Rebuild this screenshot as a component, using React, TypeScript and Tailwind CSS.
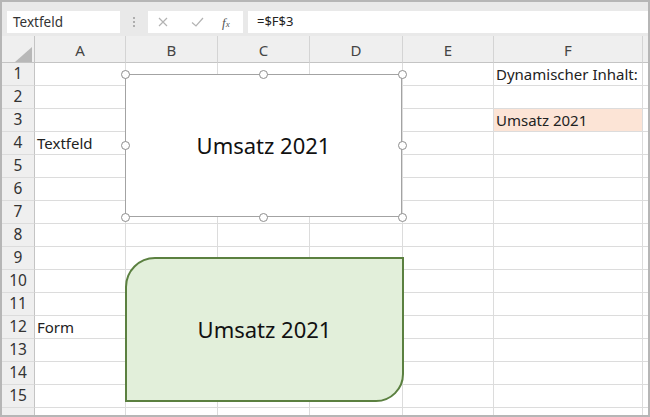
import React from "react";

const cols = ["A", "B", "C", "D", "E", "F"];
const colW = [91, 92, 92, 93, 91, 149];
const rows = Array.from({ length: 15 }, (_, i) => i + 1);

const cellText: Record<string, { text: string; pink?: boolean }> = {
  "A4": { text: "Textfeld" },
  "A12": { text: "Form" },
  "F1": { text: "Dynamischer Inhalt:" },
  "F3": { text: "Umsatz 2021", pink: true },
};

function Handle({ x, y }: { x: number; y: number }) {
  return (
    <div
      className="absolute w-[9px] h-[9px] rounded-full bg-white border-[1.5px] border-[#8e8e8e]"
      style={{ left: x - 4.5, top: y - 4.5 }}
    />
  );
}

export default function App() {
  const gridCols = `33px ${colW.map((w) => w + "px").join(" ")} 1fr`;
  const boxL = 123;
  const boxT = 38;
  const boxW = 277;
  const boxH = 143;
  return (
    <div
      className="w-[650px] h-[417px] border-2 border-[#b6b6b6] bg-white overflow-hidden flex flex-col"
      style={{ fontFamily: "'Noto Sans', 'Open Sans', sans-serif" }}
    >
      {/* formula bar */}
      <div className="h-[34px] bg-[#e9e9e9] flex items-start pt-[9px] pl-[5px] shrink-0">
        <div className="w-[113px] h-[22px] bg-white flex items-center pl-[6px] text-[13.5px] text-[#333]">
          Textfeld
        </div>
        <div className="w-[28px] h-[22px] flex flex-col items-center justify-center gap-[2px]">
          <div className="w-[2px] h-[2px] bg-[#9a9a9a] rounded-full" />
          <div className="w-[2px] h-[2px] bg-[#9a9a9a] rounded-full" />
          <div className="w-[2px] h-[2px] bg-[#9a9a9a] rounded-full" />
        </div>
        <div className="relative w-[95px] h-[22px] bg-white flex items-center">
          <svg width="95" height="22" viewBox="0 0 95 22">
            <path d="M11 7 L19 15 M19 7 L11 15" stroke="#b3b3b3" strokeWidth="1.2" fill="none" />
            <path d="M44 11.5 L48 15 L55 7" stroke="#b3b3b3" strokeWidth="1.2" fill="none" />
          </svg>
          <span className="absolute left-[74px] top-[2px] text-[13px] italic text-[#555]" style={{ fontFamily: "'Liberation Serif', serif" }}>
            f<span className="text-[9px]">x</span>
          </span>
        </div>
        <div className="ml-[5px] flex-1 h-[22px] bg-white flex items-center pl-[9px] text-[13px] text-[#222]">
          =$F$3
        </div>
      </div>

      {/* grid */}
      <div className="relative flex-1">
        <div
          className="grid"
          style={{ gridTemplateColumns: gridCols, gridTemplateRows: "27px repeat(16, 23px)" }}
        >
          {/* header row */}
          <div className="bg-[#efefef] border-r border-b border-[#c4c4c4] relative">
            <svg className="absolute left-[13px] top-[11px]" width="17" height="15" viewBox="0 0 17 15">
              <polygon points="17,0 17,15 0,15" fill="#b8b8b8" />
            </svg>
          </div>
          {cols.map((c) => (
            <div
              key={c}
              className="bg-[#efefef] border-r border-b border-r-[#d4d4d4] border-b-[#c4c4c4] flex items-center justify-center pt-[2px] text-[15px] text-[#444]"
            >
              {c}
            </div>
          ))}
          <div className="bg-[#efefef] border-b border-[#c4c4c4]" />

          {[...rows, 16].map((r) => (
            <React.Fragment key={r}>
              <div className="bg-[#efefef] border-r border-b border-r-[#c4c4c4] border-b-[#dcdcdc] flex items-center justify-center text-[15.5px] text-[#333]">
                {r <= 15 ? r : ""}
              </div>
              {cols.map((c) => {
                const info = cellText[c + r];
                return (
                  <div
                    key={c}
                    className={`border-r border-b border-[#dcdcdc] flex items-center pl-[2px] text-[15px] text-[#222] whitespace-nowrap overflow-visible ${
                      info?.pink ? "bg-[#fce4d6]" : "bg-white"
                    }`}
                  >
                    {info?.text ?? ""}
                  </div>
                );
              })}
              <div className="border-b border-[#dcdcdc] bg-white" />
            </React.Fragment>
          ))}
        </div>

        {/* text box */}
        <div
          className="absolute bg-white border-[1.5px] border-[#a3a3a3] flex items-center justify-center text-[22px] text-[#111]"
          style={{ left: boxL, top: boxT, width: boxW, height: boxH }}
        >
          Umsatz 2021
        </div>
        <Handle x={boxL} y={boxT} />
        <Handle x={boxL + boxW / 2} y={boxT} />
        <Handle x={boxL + boxW} y={boxT} />
        <Handle x={boxL} y={boxT + boxH / 2} />
        <Handle x={boxL + boxW} y={boxT + boxH / 2} />
        <Handle x={boxL} y={boxT + boxH} />
        <Handle x={boxL + boxW / 2} y={boxT + boxH} />
        <Handle x={boxL + boxW} y={boxT + boxH} />

        {/* shape */}
        <div
          className="absolute left-[123px] top-[221px] w-[279px] h-[145px] bg-[#e2efda] border-2 border-[#5b8040] rounded-tl-[30px] rounded-br-[28px] flex items-center justify-center text-[22px] text-[#111]"
        >
          Umsatz 2021
        </div>
      </div>
    </div>
  );
}
